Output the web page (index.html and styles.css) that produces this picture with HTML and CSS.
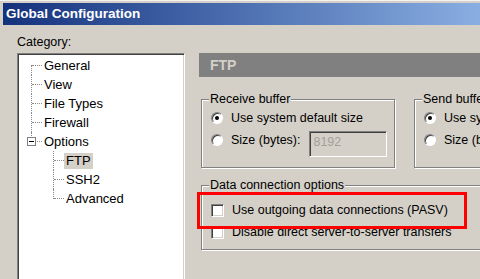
FILE: index.html
```html
<!DOCTYPE html>
<html>
<head>
<meta charset="utf-8">
<link rel="stylesheet" href="styles.css">
</head>
<body>
<div class="window">
  <div class="titlebar">Global Configuration</div>
  <div class="content">
    <div class="sidebar">
      <div class="cat-label">Category:</div>
      <div class="tree">
        <ul class="tree-list">
          <li class="node first"><span class="conn"></span><span class="text">General</span></li>
          <li class="node"><span class="conn"></span><span class="text">View</span></li>
          <li class="node"><span class="conn"></span><span class="text">File Types</span></li>
          <li class="node"><span class="conn"></span><span class="text">Firewall</span></li>
          <li class="node last"><span class="conn"><span class="toggle"></span></span><span class="text">Options</span></li>
          <li>
            <ul class="tree-list children">
              <li class="node"><span class="conn"></span><span class="text selected">FTP</span></li>
              <li class="node"><span class="conn"></span><span class="text">SSH2</span></li>
              <li class="node last"><span class="conn"></span><span class="text">Advanced</span></li>
            </ul>
          </li>
        </ul>
      </div>
    </div>
    <div class="panel">
      <div class="panel-header">FTP</div>
      <div class="group-row">
        <fieldset class="group group-buffer">
          <legend>Receive buffer</legend>
          <div class="opt"><span class="radio checked"></span><span>Use system default size</span></div>
          <div class="opt opt-size"><span class="radio"></span><span class="size-label">Size (bytes):</span><span class="input">8192</span></div>
        </fieldset>
        <fieldset class="group group-buffer group-send">
          <legend>Send buffer</legend>
          <div class="opt"><span class="radio checked"></span><span>Use system default size</span></div>
          <div class="opt opt-size"><span class="radio"></span><span class="size-label">Size (bytes):</span><span class="input">8192</span></div>
        </fieldset>
      </div>
      <fieldset class="group group-data">
        <legend>Data connection options</legend>
        <div class="opt opt-check"><span class="check"></span><span>Use outgoing data connections (PASV)</span></div>
        <div class="opt opt-check"><span class="check"></span><span>Disable direct server-to-server transfers</span></div>
      </fieldset>
    </div>
  </div>
  <div class="highlight"></div>
</div>
</body>
</html>
```

FILE: styles.css
```css
html, body {
  margin: 0;
  padding: 0;
  background: #d4d0c8;
  overflow: hidden;
}

.window {
  position: relative;
  width: 480px;
  height: 279px;
  overflow: hidden;
  padding-top: 3px;
  box-sizing: border-box;
  box-shadow: inset 0 1px 0 #f4f3f1;
  font-family: "Liberation Sans", Arial, sans-serif;
  font-size: 12.5px;
  color: #000;
}

.titlebar {
  margin-left: 3px;
  height: 22px;
  line-height: 22px;
  padding-left: 3px;
  font-weight: bold;
  font-size: 13.5px;
  color: #fff;
  background: linear-gradient(to right, #14327c 0%, #3c5da2 35%, #5f82bf 65%, #8aaee2 100%);
  white-space: nowrap;
}

.content {
  display: flex;
  align-items: flex-start;
}

.sidebar {
  padding: 9px 0 0 17px;
  flex: none;
}

.cat-label {
  line-height: 16px;
  margin-bottom: 3px;
}

.tree {
  width: 168px;
  height: 240px;
  box-sizing: border-box;
  background: #fff;
  border: 1px solid;
  border-color: #808080 #fff #fff #808080;
  box-shadow: inset 1px 1px 0 #404040, inset -1px -1px 0 #d4d0c8;
  padding: 2px 0 0 1px;
}

.tree-list {
  list-style: none;
  margin: 0;
  padding: 0;
}

.tree-list.children {
  padding-left: 22px;
}

.node {
  display: flex;
  align-items: center;
  height: 19px;
}

.conn {
  position: relative;
  flex: none;
  width: 23px;
  height: 19px;
}

.conn::before {
  content: "";
  position: absolute;
  left: 12px;
  top: 0;
  bottom: 0;
  border-left: 1px dotted #8a8a8a;
}

.first .conn::before {
  top: 9px;
}

.last .conn::before {
  bottom: 9px;
}

.conn::after {
  content: "";
  position: absolute;
  left: 13px;
  top: 9px;
  width: 10px;
  border-top: 1px dotted #8a8a8a;
}

.toggle {
  position: absolute;
  z-index: 1;
  left: 8px;
  top: 5px;
  width: 9px;
  height: 9px;
  box-sizing: border-box;
  border: 1px solid #808080;
  background: #fff;
}

.toggle::after {
  content: "";
  position: absolute;
  left: 1px;
  top: 3px;
  width: 5px;
  height: 1px;
  background: #000;
}

.text {
  padding: 0 2px;
  line-height: 16px;
  white-space: nowrap;
  font-size: 13px;
}

.text.selected {
  background: #d4d0c8;
}

.panel {
  flex: none;
  width: 300px;
  margin-left: 14px;
  padding-top: 28px;
}

.panel-header {
  height: 24px;
  line-height: 24px;
  background: #808080;
  color: #d4d0c8;
  font-weight: bold;
  font-size: 14px;
  padding-left: 11px;
}

.group-row {
  display: flex;
  gap: 19px;
  margin-top: 14px;
  margin-left: 2px;
}

.group {
  margin: 0;
  min-width: 0;
  padding: 0 0 0 9px;
  border: 1px solid #808080;
  box-shadow: inset 1px 1px 0 #fff, 1px 1px 0 #fff;
  box-sizing: border-box;
}

.group legend {
  padding: 0 1px;
  margin-left: -2px;
  line-height: 16px;
  background: #d4d0c8;
}

.group-buffer {
  flex: none;
  width: 194px;
  padding-top: 1px;
  padding-bottom: 10px;
}

.group-send {
  width: 200px;
}

.opt {
  display: flex;
  align-items: center;
  height: 20px;
  white-space: nowrap;
}

.radio {
  position: relative;
  flex: none;
  width: 12px;
  height: 12px;
  box-sizing: border-box;
  border-radius: 50%;
  border: 1px solid;
  border-color: #808080 #fff #fff #808080;
  background: #fff;
  box-shadow: inset 1px 1px 0 #404040;
  margin-right: 8px;
}

.radio.checked::after {
  content: "";
  position: absolute;
  left: 3px;
  top: 3px;
  width: 4px;
  height: 4px;
  border-radius: 50%;
  background: #000;
}

.opt-size {
  margin-top: 3px;
  height: 26px;
  align-items: flex-start;
}

.opt-size .radio {
  margin-top: 3px;
}

.size-label {
  line-height: 20px;
  margin-top: -1px;
}

.input {
  flex: none;
  margin-left: 9px;
  width: 78px;
  height: 26px;
  box-sizing: border-box;
  border: 1px solid;
  border-color: #808080 #fff #fff #808080;
  box-shadow: inset 1px 1px 0 #404040, inset -1px -1px 0 #d4d0c8;
  background: #d4d0c8;
  color: #a3a09a;
  padding: 2px 0 0 3px;
  line-height: 16px;
}

.group-data {
  width: 300px;
  margin: 9px 0 0 2px;
  padding-top: 6px;
  padding-bottom: 6px;
}

.opt-check {
  height: 22px;
}

.check {
  flex: none;
  width: 13px;
  height: 13px;
  box-sizing: border-box;
  border: 1px solid;
  border-color: #808080 #fff #fff #808080;
  box-shadow: inset 1px 1px 0 #404040, inset -1px -1px 0 #d4d0c8;
  background: #fff;
  margin-right: 8px;
}

.highlight {
  position: absolute;
  left: 197px;
  top: 192px;
  width: 270px;
  height: 37px;
  box-sizing: border-box;
  border: 3px solid #ff0000;
}
```
